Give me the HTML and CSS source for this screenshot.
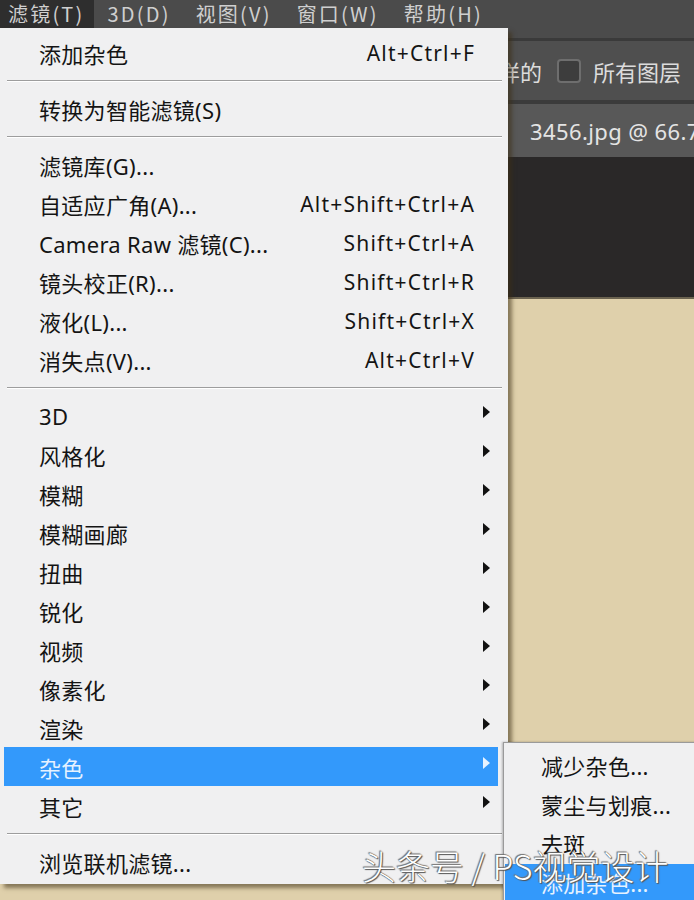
FILE: index.html
```html
<!DOCTYPE html>
<html lang="zh-CN">
<head>
<meta charset="utf-8">
<title>滤镜菜单</title>
<link rel="stylesheet" href="styles.css">
</head>
<body>
<div class="app">
  <div class="menubar">
    <span class="mb-item active">滤镜(T)</span>
    <span class="mb-item">3D(D)</span>
    <span class="mb-item">视图(V)</span>
    <span class="mb-item">窗口(W)</span>
    <span class="mb-item">帮助(H)</span>
  </div>
  <div class="options">
    <span class="opt-text">对所有图层取样的</span>
    <span class="checkbox"></span>
    <span class="opt-text">所有图层</span>
  </div>
  <div class="tabs"><span class="tab">3456.jpg @ 66.7% (RGB/8)</span></div>
  <div class="canvas"></div>
  <div class="doc"></div>
</div>

<div class="menu">
  <div class="item"><span class="label">添加杂色</span><span class="key">Alt+Ctrl+F</span></div>
  <div class="sep"></div>
  <div class="item"><span class="label">转换为智能滤镜(S)</span></div>
  <div class="sep"></div>
  <div class="item"><span class="label">滤镜库(G)...</span></div>
  <div class="item"><span class="label">自适应广角(A)...</span><span class="key">Alt+Shift+Ctrl+A</span></div>
  <div class="item"><span class="label">Camera Raw 滤镜(C)...</span><span class="key">Shift+Ctrl+A</span></div>
  <div class="item"><span class="label">镜头校正(R)...</span><span class="key">Shift+Ctrl+R</span></div>
  <div class="item"><span class="label">液化(L)...</span><span class="key">Shift+Ctrl+X</span></div>
  <div class="item"><span class="label">消失点(V)...</span><span class="key">Alt+Ctrl+V</span></div>
  <div class="sep"></div>
  <div class="item sub"><span class="label">3D</span><span class="arrow"></span></div>
  <div class="item sub"><span class="label">风格化</span><span class="arrow"></span></div>
  <div class="item sub"><span class="label">模糊</span><span class="arrow"></span></div>
  <div class="item sub"><span class="label">模糊画廊</span><span class="arrow"></span></div>
  <div class="item sub"><span class="label">扭曲</span><span class="arrow"></span></div>
  <div class="item sub"><span class="label">锐化</span><span class="arrow"></span></div>
  <div class="item sub"><span class="label">视频</span><span class="arrow"></span></div>
  <div class="item sub"><span class="label">像素化</span><span class="arrow"></span></div>
  <div class="item sub"><span class="label">渲染</span><span class="arrow"></span></div>
  <div class="item sub hl"><span class="label">杂色</span><span class="arrow"></span></div>
  <div class="item sub"><span class="label">其它</span><span class="arrow"></span></div>
  <div class="sep"></div>
  <div class="item"><span class="label">浏览联机滤镜...</span></div>
</div>

<div class="submenu">
  <div class="sitem">减少杂色...</div>
  <div class="sitem">蒙尘与划痕...</div>
  <div class="sitem">去斑</div>
  <div class="sitem hl">添加杂色...</div>
</div>

<div class="watermark">头条号 / PS视觉设计</div>
</body>
</html>
```

FILE: styles.css
```css
html, body {
  margin: 0;
  padding: 0;
}
body {
  width: 694px;
  height: 900px;
  overflow: hidden;
  position: relative;
  background: #dfd0ab;
  font-family: "Noto Sans", "Noto Sans CJK SC", sans-serif;
}
.app {
  display: flex;
  flex-direction: column;
  height: 900px;
}
.menubar {
  height: 41px;
  box-sizing: border-box;
  background: #4b4b4b;
  border-bottom: 3px solid #3a3a3a;
  display: flex;
  align-items: flex-start;
}
.mb-item {
  height: 28px;
  line-height: 28px;
  font-size: 20px;
  letter-spacing: 2.2px;
  color: #cfcfcf;
  padding: 0 12px 0 13px;
  font-family: "Noto Sans CJK SC", sans-serif;
  white-space: nowrap;
}
.mb-item.active {
  background: #2e2e2e;
  padding: 0 9px 0 8px;
  margin-right: 1px;
}
.options {
  height: 59px;
  background: #4f4f4f;
  border-bottom: 4px solid #3b3b3b;
  display: flex;
  align-items: center;
  justify-content: flex-end;
  padding-right: 13px;
  white-space: nowrap;
  overflow: hidden;
}
.opt-text {
  font-family: "Noto Sans CJK SC", sans-serif;
  font-size: 22px;
  color: #dcdcdc;
}
.checkbox {
  width: 20px;
  height: 20px;
  border: 2px solid #6e6e6e;
  border-radius: 4px;
  background: #3d3d3d;
  margin: 0 12px 0 15px;
}
.tabs {
  height: 53px;
  background: #585858;
  display: flex;
  align-items: center;
  padding-left: 530px;
  white-space: nowrap;
  overflow: hidden;
}
.tab {
  font-size: 22px;
  letter-spacing: 0.4px;
  color: #e4e4e4;
  font-family: "Noto Sans", sans-serif;
}
.canvas {
  height: 140px;
  background: #2a2828;
}
.doc {
  flex: 1;
  background: #dfd0ab;
  border-top: 2px solid #6b6350;
}

/* Main dropdown */
.menu {
  position: absolute;
  left: 0;
  top: 28px;
  width: 508px;
  height: 856px;
  box-sizing: border-box;
  padding-top: 5px;
  background: #f0f0f1;
  box-shadow: 4px 4px 4px rgba(60, 45, 20, 0.55);
  color: #141414;
}
.item {
  display: grid;
  grid-template-columns: 1fr auto 24px;
  align-items: center;
  height: 39px;
  margin: 0 10px 0 4px;
  padding-left: 35px;
  font-size: 22px;
  letter-spacing: 0.3px;
  font-family: "Noto Sans", "Noto Sans CJK SC", sans-serif;
}
.label {
  white-space: nowrap;
}
.key {
  grid-column: 2;
  white-space: nowrap;
  font-size: 21px;
  letter-spacing: 1.2px;
  margin-right: -1px;
}
.arrow {
  grid-column: 3;
  width: 0;
  height: 0;
  border-top: 6px solid transparent;
  border-bottom: 6px solid transparent;
  border-left: 7px solid #111;
  margin-left: 9px;
  margin-top: -8px;
}
.item.hl {
  background: #3399fb;
  color: #e6f2ff;
}
.item.hl .arrow {
  border-left-color: #e6f2ff;
}
.sep {
  height: 17px;
  display: flex;
  align-items: center;
  margin: 0 6px 0 7px;
}
.sep::before {
  content: "";
  flex: 1;
  height: 1px;
  background: #9d9d9d;
  border-bottom: 1px solid #ffffff;
}

/* Submenu */
.submenu {
  position: absolute;
  left: 503px;
  top: 742px;
  width: 200px;
  height: 170px;
  box-sizing: border-box;
  padding-top: 4px;
  background: #f0f0f1;
  border: 1px solid #9a9a9a;
  box-shadow: -1px 0 2px rgba(0, 0, 0, 0.25);
}
.sitem {
  height: 39px;
  line-height: 39px;
  padding-left: 36px;
  margin-left: 1px;
  font-size: 22px;
  letter-spacing: 0.3px;
  color: #141414;
  font-family: "Noto Sans", "Noto Sans CJK SC", sans-serif;
  white-space: nowrap;
}
.sitem.hl {
  background: #3399fb;
  color: #e6f2ff;
}

.watermark {
  position: absolute;
  left: 362px;
  top: 841px;
  font-family: "Noto Sans CJK SC", sans-serif;
  font-weight: 300;
  font-size: 34px;
  color: #ffffff;
  white-space: nowrap;
  text-shadow: 0 0 1px #444, 1px 1px 1px #555, -1px -1px 1px #777;
}
```
